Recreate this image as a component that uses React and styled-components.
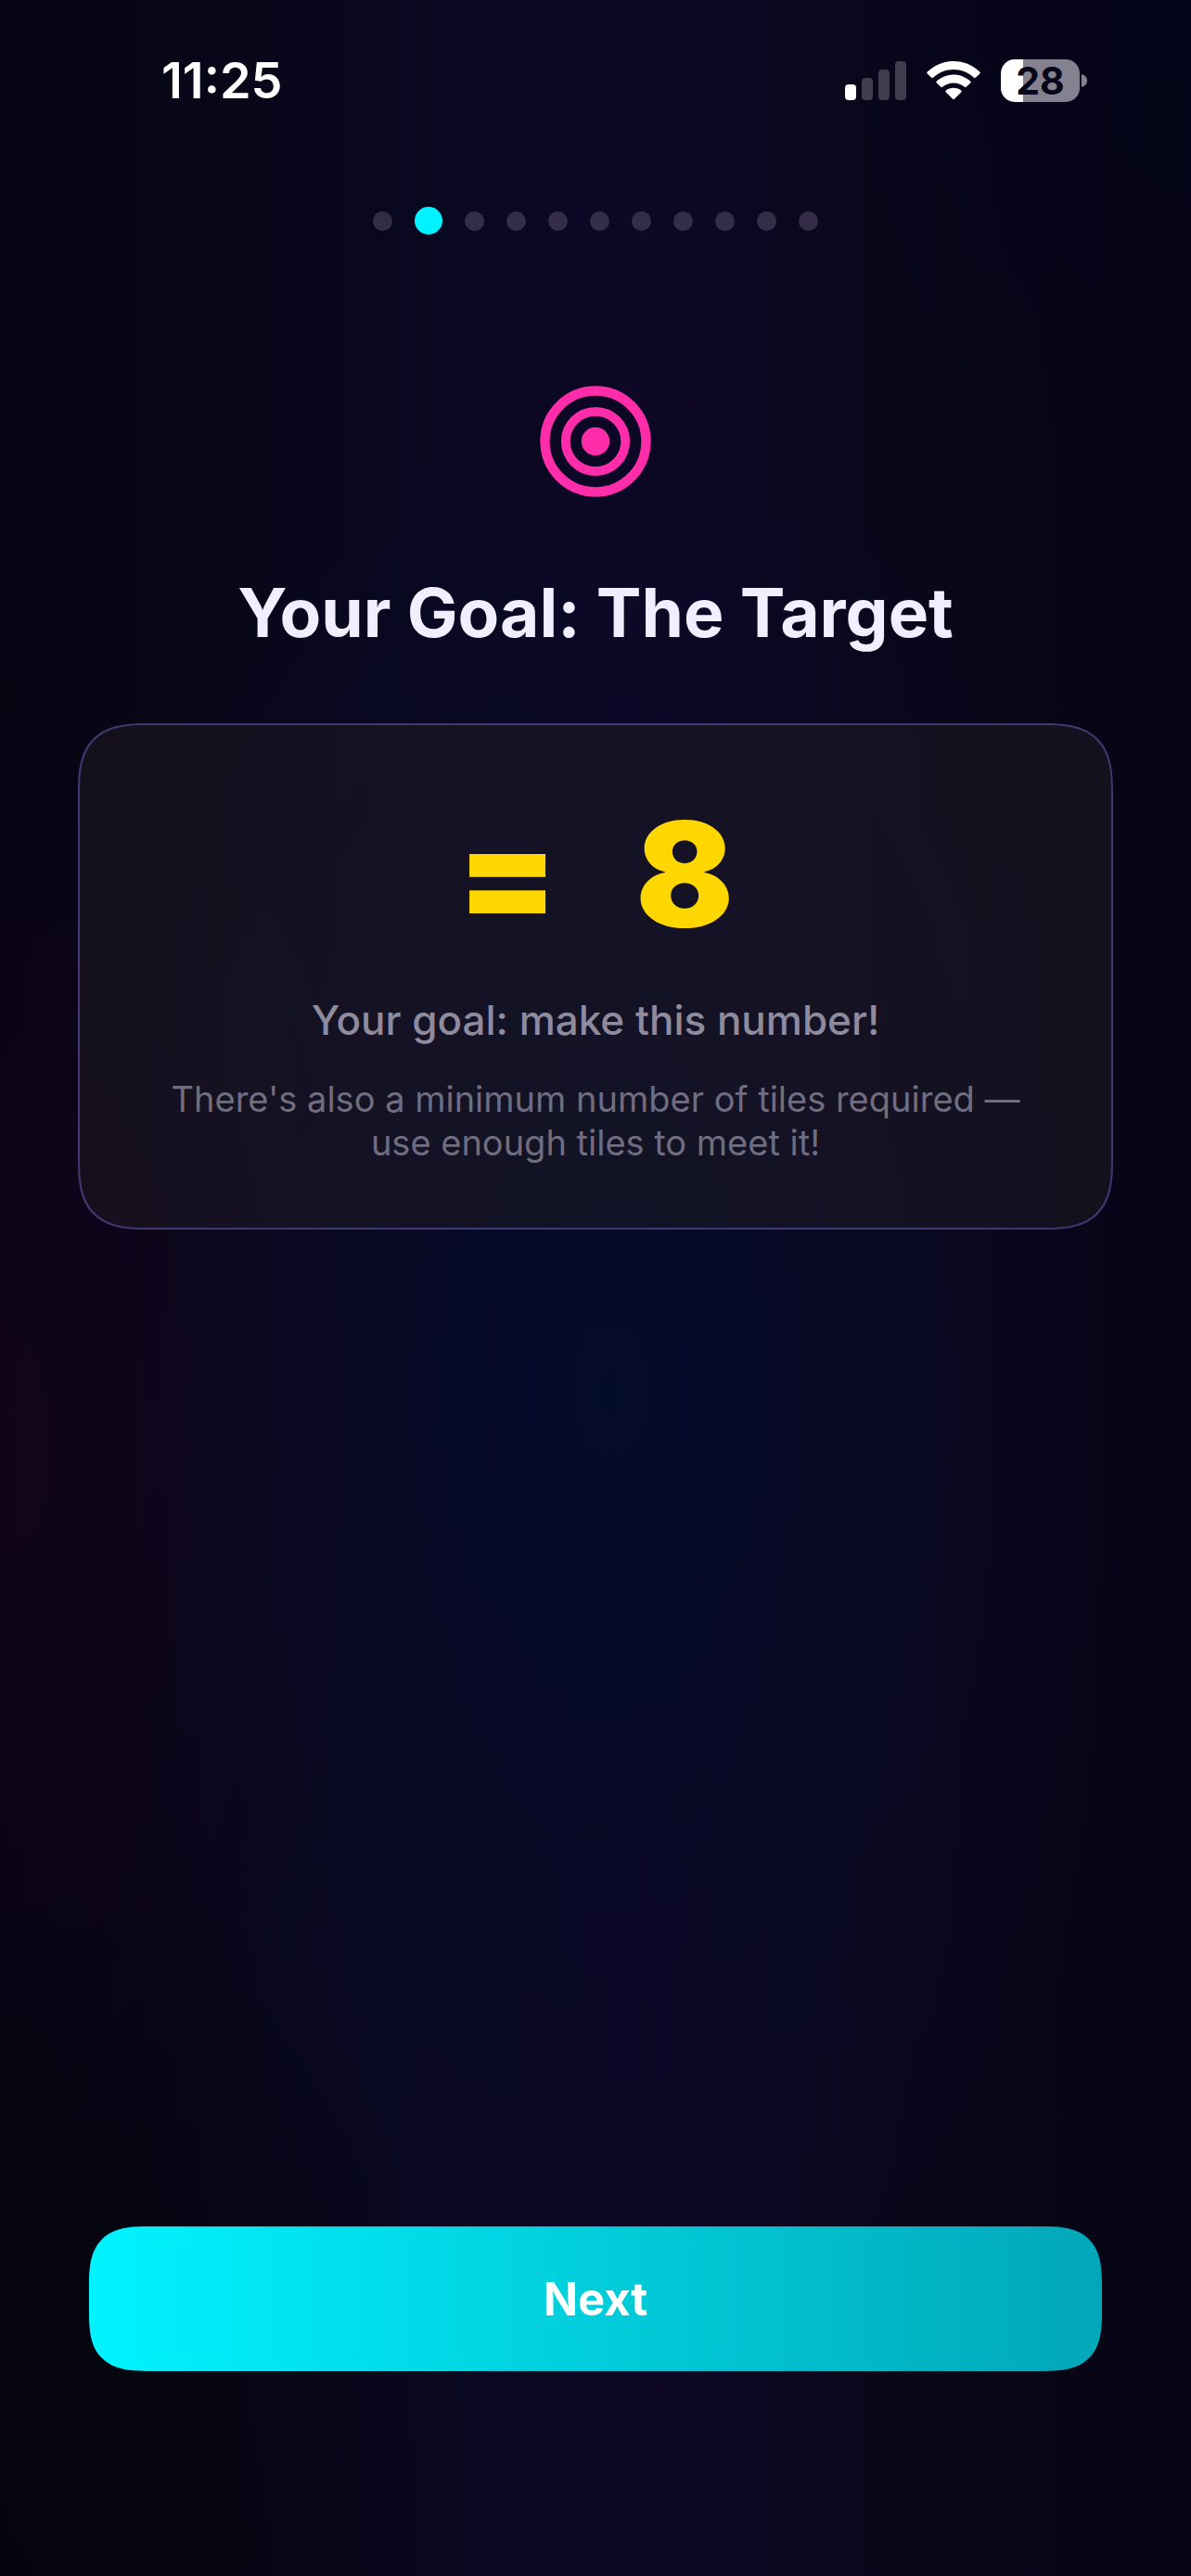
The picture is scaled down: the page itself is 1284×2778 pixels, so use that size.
import styled, { createGlobalStyle } from "styled-components";

const GlobalStyle = createGlobalStyle`
  * {
    box-sizing: border-box;
  }

  body {
    margin: 0;
    background-color: #05030f;
    font-family: Inter, "Liberation Sans", sans-serif;
  }
`;

const Page = styled.div`
  display: flex;
  flex-direction: column;
  min-height: 100vh;
  background:
    radial-gradient(ellipse 32% 32% at 0% 56%, #13041ccc, transparent),
    radial-gradient(ellipse 30% 22% at 100% 0%, #02041aaa, transparent),
    radial-gradient(ellipse 40% 30% at 0% 100%, #03050acc, transparent),
    radial-gradient(ellipse 46% 40% at 51% 54%, #040c2c, #070a2899 45%, transparent),
    linear-gradient(90deg, #060412, #080719 18%, #0a0720 36%, #0e0726 54%, #0a071b 74%, #070415);
`;

const StatusBar = styled.header`
  display: flex;
  align-items: center;
  justify-content: space-between;
  height: 174px;
  padding: 0 112px 0 174px;
`;

const Time = styled.time`
  color: white;
  font-size: 54px;
  font-weight: 600;
  line-height: 64px;
`;

const StatusIcons = styled.div`
  display: flex;
  align-items: center;
  gap: 22px;
`;

const Battery = styled.div`
  display: flex;
  align-items: center;
  gap: 2px;
`;

const BatteryBody = styled.div`
  display: flex;
  align-items: center;
  justify-content: center;
  width: 85px;
  height: 46px;
  border-radius: 15px;
  background: linear-gradient(90deg, white 28%, #84828f 28%);
  color: #080619;
  font-size: 41px;
  font-weight: 700;
  line-height: 46px;
`;

const Steps = styled.ol`
  display: flex;
  align-items: center;
  justify-content: center;
  gap: 24px;
  height: 30px;
  margin: 49px 0 0;
  padding: 0;
  list-style: none;
`;

const Step = styled.li`
  width: ${({ $active }) => ($active ? 30 : 21)}px;
  height: ${({ $active }) => ($active ? 30 : 21)}px;
  border-radius: 50%;
  background-color: ${({ $active }) => ($active ? "#00f3ff" : "#332d48")};
`;

const Content = styled.main`
  display: flex;
  flex: 1;
  flex-direction: column;
  align-items: center;
  padding: 163px 84px 0;
`;

const Title = styled.h1`
  margin: 79px 0 73px;
  color: #f0eeff;
  font-size: 73px;
  font-weight: 700;
  line-height: 92px;
  text-align: center;
`;

const GoalCard = styled.section`
  display: flex;
  flex-direction: column;
  align-items: center;
  width: 100%;
  padding: 68px 72px;
  border: 2px solid #5f55a899;
  border-radius: 60px;
  background-color: #1f1c2480;
  text-align: center;

  @supports (corner-shape: superellipse(1.5)) {
    border-radius: 76px;
    corner-shape: superellipse(1.5);
  }
`;

const TargetNumber = styled.p`
  display: flex;
  gap: 84px;
  margin: 0;
  color: #ffd700;
  font-size: 156px;
  font-weight: 900;
  line-height: 186px;
`;

const GoalText = styled.p`
  margin: 36px 0 0;
  color: #8f8b9f;
  font-size: 44px;
  font-weight: 500;
  line-height: 56px;
`;

const HintText = styled.p`
  margin: 34px 0 0;
  color: #716d80;
  font-size: 38px;
  line-height: 47px;
`;

const Footer = styled.footer`
  display: flex;
  padding: 0 96px 221px;
`;

const NextButton = styled.button`
  flex: 1;
  height: 156px;
  padding: 0;
  border: none;
  border-radius: 48px;
  background: linear-gradient(90deg, #00f3ff, #02a7b8);
  color: white;
  font-family: inherit;
  font-size: 49px;
  font-weight: 700;
  cursor: pointer;

  @supports (corner-shape: superellipse(1.5)) {
    border-radius: 64px;
    corner-shape: superellipse(1.5);
  }
`;

const STEP_COUNT = 11;
const CURRENT_STEP = 1;

function SignalIcon() {
  return (
    <svg width="66" height="42" viewBox="0 0 66 42" fill="#fff">
      <rect x="0" y="25" width="12" height="17" rx="4" />
      <g opacity="0.22">
        <rect x="18" y="18" width="12" height="24" rx="4" />
        <rect x="36" y="9" width="12" height="33" rx="4" />
        <rect x="54" y="0" width="12" height="42" rx="4" />
      </g>
    </svg>
  );
}

function WifiIcon() {
  return (
    <svg width="58" height="42" viewBox="0 0 58 42" fill="#fff">
      <path d="M29 0C40 0 50 4.400 57.300 11.600Q58.100 12.500 57.300 13.400L52.800 17.800Q51.900 18.600 51 17.800C45 12.200 37.500 9 29 9S13 12.200 7 17.800Q6.100 18.600 5.200 17.800L0.700 13.400Q-0.100 12.500 0.700 11.600C8 4.400 18 0 29 0Z" />
      <path d="M29 14.500C36 14.500 42.300 17.200 47.200 21.600Q48.100 22.500 47.200 23.400L42.700 27.800Q41.800 28.600 40.900 27.800C37.700 25 33.600 23.400 29 23.400S20.300 25 17.100 27.800Q16.200 28.600 15.300 27.800L10.800 23.400Q9.900 22.500 10.800 21.600C15.700 17.200 22 14.500 29 14.500Z" />
      <path d="M29 28.800C32.300 28.800 35 29.800 37.200 31.600Q38.100 32.500 37.200 33.400L29.900 40.800Q29 41.700 28.100 40.800L20.800 33.400Q19.900 32.500 20.800 31.600C23 29.800 25.700 28.800 29 28.800Z" />
    </svg>
  );
}

function TargetIcon() {
  return (
    <svg width="120" height="120" viewBox="0 0 120 120" fill="none" stroke="#ff2daa">
      <circle cx="60" cy="60" r="54.500" strokeWidth="10.400" />
      <circle cx="60" cy="60" r="32.200" strokeWidth="9.800" />
      <circle cx="60" cy="60" r="15.200" fill="#ff2daa" stroke="none" />
    </svg>
  );
}

export default function App() {
  return (
    <Page>
      <GlobalStyle />

      <StatusBar>
        <Time>11:25</Time>
        <StatusIcons>
          <SignalIcon />
          <WifiIcon />
          <Battery>
            <BatteryBody>28</BatteryBody>
            <svg width="6" height="14" viewBox="0 0 6 14" fill="#84828f">
              <path d="M0 0C3.500 1 6 3.600 6 7S3.500 13 0 14Z" />
            </svg>
          </Battery>
        </StatusIcons>
      </StatusBar>

      <Steps>
        {Array.from({ length: STEP_COUNT }, (_, i) => (
          <Step key={i} $active={i === CURRENT_STEP} />
        ))}
      </Steps>

      <Content>
        <TargetIcon />
        <Title>Your Goal: The Target</Title>

        <GoalCard>
          <TargetNumber>
            <span>=</span> <span>8</span>
          </TargetNumber>
          <GoalText>Your goal: make this number!</GoalText>
          <HintText>
            There's also a minimum number of tiles required — use enough tiles
            to meet it!
          </HintText>
        </GoalCard>
      </Content>

      <Footer>
        <NextButton type="button">Next</NextButton>
      </Footer>
    </Page>
  );
}
